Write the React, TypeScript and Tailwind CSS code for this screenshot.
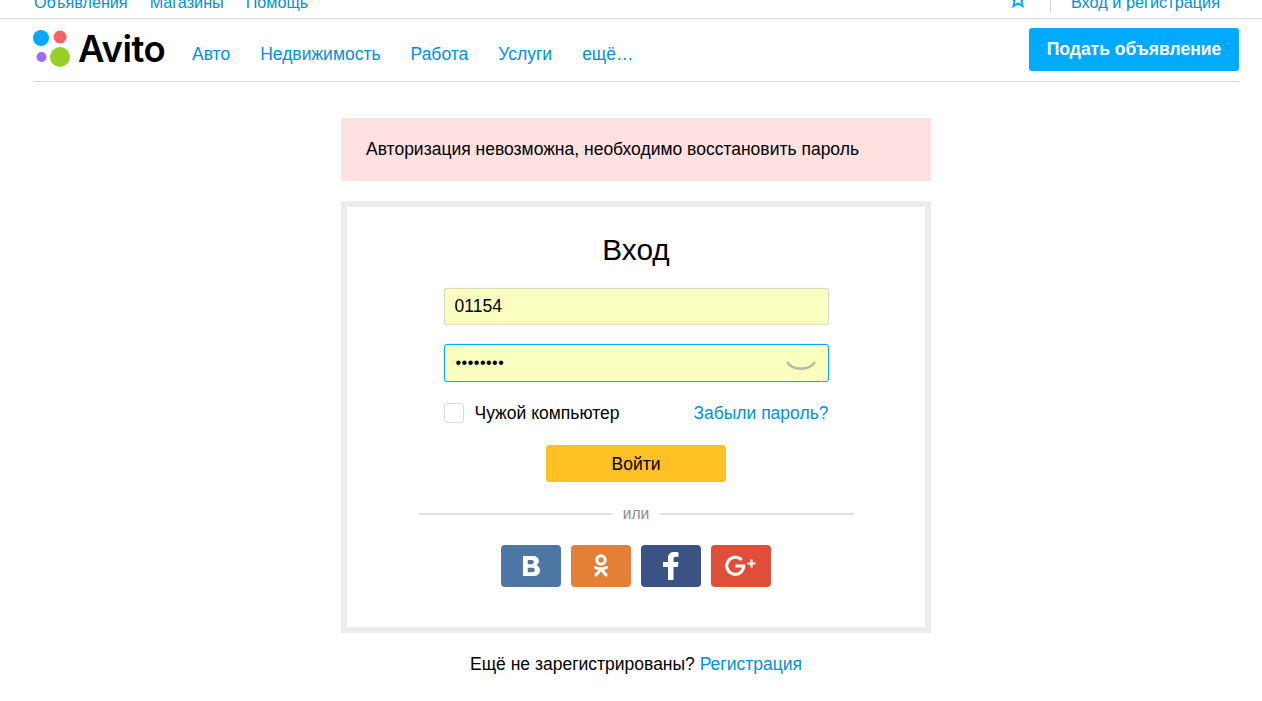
export default function App() {
  return (
    <div className="h-[701px] overflow-hidden bg-white text-black font-['Liberation_Sans',Arial,sans-serif] text-[17.5px]">
      <div className="h-[19px] overflow-hidden border-b border-[#d9d9d9] pl-[34px] pr-[42px] flex items-end justify-between">
        <div className="flex gap-[22px] text-[#0091d9] text-[16.2px] leading-[24px] mb-[4px] h-[24px]">
          <a>Объявления</a>
          <a>Магазины</a>
          <a>Помощь</a>
        </div>
        <div className="flex items-center text-[#0091d9] text-[16.3px] leading-[24px] mb-[4px] h-[24px]">
          <svg width="18" height="18" viewBox="0 0 18 18" className="mr-[23px] -mt-[7px] ml-[1px]" fill="none" stroke="#00aaff" strokeWidth="2">
            <path d="M9 2l2.200 4.800 5 .6-3.700 3.500 1 5.100L9 13.500l-4.500 2.500 1-5.100L1.800 7.400l5-.6z" />
          </svg>
          <div className="w-px h-[24px] bg-[#d9d9d9] mr-[20px]" />
          <a>Вход и регистрация</a>
        </div>
      </div>

      <div className="ml-[34px] mr-[23px] h-[63px] border-b border-[#d9d9d9] flex items-center justify-between">
        <div className="flex items-center">
          <svg width="38" height="38" viewBox="0 0 38 38" className="-ml-[1px] mt-[-3px]">
            <circle cx="8" cy="8" r="8" fill="#00aaff" />
            <circle cx="27" cy="7" r="6.500" fill="#ff6163" />
            <circle cx="8.500" cy="27" r="5" fill="#a169f7" />
            <circle cx="27" cy="27" r="10" fill="#97cf26" />
          </svg>
          <span className="ml-[7px] w-[88px] font-['Inter',sans-serif] font-semibold text-[36.500px] leading-none tracking-[-0.5px] mt-[-2px]">Avito</span>
          <nav className="ml-[26px] flex gap-[30px] text-[#0091d9] text-[17.500px] mt-[8px]">
            <a>Авто</a>
            <a>Недвижимость</a>
            <a>Работа</a>
            <a>Услуги</a>
            <a>ещё…</a>
          </nav>
        </div>
        <button className="w-[210px] h-[43px] rounded-[3px] bg-[#00aaff] text-white font-bold text-[17.500px] mt-[-2px]">
          Подать объявление
        </button>
      </div>

      <div className="w-[590px] ml-[341px] mt-[36px]">
        <div className="h-[63px] bg-[#ffe1e1] pl-[25px] flex items-center">Авторизация невозможна, необходимо восстановить пароль</div>
        <div className="mt-[20px] h-[432px] border-[6px] border-[#ececec] flex flex-col items-center">
          <h1 className="mt-[26px] text-[29.800px] leading-[34px]">Вход</h1>
          <div className="mt-[21px] w-[385px] h-[37px] rounded-[3px] border border-[#d9d9c8] bg-[#fafebe] pl-[10px] flex items-center shadow-[0_0_1px_#ccc]">01154</div>
          <div className="mt-[19px] w-[385px] h-[38px] rounded-[3px] border border-[#00aaff] bg-[#fafebe] pl-[11px] pr-[13px] flex items-center justify-between shadow-[0_0_2px_#9fdcff]">
            <span className="tracking-[0.5px] text-[16px] leading-none">••••••••</span>
            <svg width="32" height="14" viewBox="0 0 32 14" fill="none" stroke="#b9b9a5" strokeWidth="2.500" className="mt-[5px] mr-[-2px]">
              <path d="M2 3 C 8 12, 24 12, 30 3" />
            </svg>
          </div>
          <div className="mt-[21px] w-[385px] h-[20px] flex items-center justify-between">
            <div className="flex items-center">
              <div className="w-[20px] h-[20px] rounded-[3px] border border-[#d9d9d9] bg-white" />
              <span className="ml-[11px]">Чужой компьютер</span>
            </div>
            <a className="text-[#0091d9]">Забыли пароль?</a>
          </div>
          <button className="mt-[22px] w-[180px] h-[37px] rounded-[3px] bg-[#ffc124] pt-[1px]">Войти</button>
          <div className="mt-[23px] w-[435px] flex items-center gap-[11px] text-[#8c8c8c] text-[15.600px] leading-[18px]">
            <div className="flex-1 h-[2px] bg-[#e0e0e0]" />
            <span>или</span>
            <div className="flex-1 h-[2px] bg-[#e0e0e0]" />
          </div>
          <div className="mt-[22px] flex gap-[10px]">
            <div className="w-[60px] h-[42px] rounded-[4px] bg-[#4e76a4] flex items-center justify-center">
              <svg width="17" height="20" viewBox="2 2 15 16" preserveAspectRatio="none" fill="#fff">
                <path fillRule="evenodd" d="M2 2h8.500c3.500 0 5.500 1.600 5.500 4 0 1.700-.9 2.900-2.400 3.400 2.100.4 3.400 1.900 3.400 4 0 3-2.300 4.600-6 4.600H2zM6.200 5.100v3.400h3.300c1.300 0 2.100-.6 2.100-1.700s-.8-1.700-2.100-1.700zM6.200 11.300v3.600h3.800c1.500 0 2.400-.7 2.400-1.800s-.9-1.800-2.400-1.800z" />
              </svg>
            </div>
            <div className="w-[60px] h-[42px] rounded-[4px] bg-[#e47f37] flex items-center justify-center">
              <svg width="16" height="26" viewBox="0 0 16 26" fill="none" stroke="#fff" strokeWidth="3">
                <circle cx="8" cy="7" r="4.200" />
                <path d="M2.500 14.500c3.500 2 7.500 2 11 0" strokeLinecap="round" />
                <path d="M8 16l-5 6M8 16l5 6" strokeLinecap="round" />
              </svg>
            </div>
            <div className="w-[60px] h-[42px] rounded-[4px] bg-[#3b5284] flex items-center justify-center">
              <svg width="16" height="30" viewBox="0 0 16 30" fill="#fff">
                <path d="M5 29V16H0v-5h5V7.500C5 3 7.500 1 11 1c1.800 0 3.500.1 4.500.3v4.500H13c-2 0-2.500 1-2.500 2.500V11h5l-.7 5h-4.300v13z" />
              </svg>
            </div>
            <div className="w-[60px] h-[42px] rounded-[4px] bg-[#df4e39] flex items-center justify-center">
              <svg width="32" height="22" viewBox="0 0 32 22" fill="none" stroke="#fff">
                <path d="M16.500 5A8.500 8.500 0 1 0 18.800 11H10.500" strokeWidth="3" />
                <path d="M26.500 4.500v8M22.500 8.500h8" strokeWidth="2.200" />
              </svg>
            </div>
          </div>
        </div>
        <div className="mt-[20px] text-center leading-[22px]">
          Ещё не зарегистрированы? <a className="text-[#0091d9]">Регистрация</a>
        </div>
      </div>
    </div>
  );
}
